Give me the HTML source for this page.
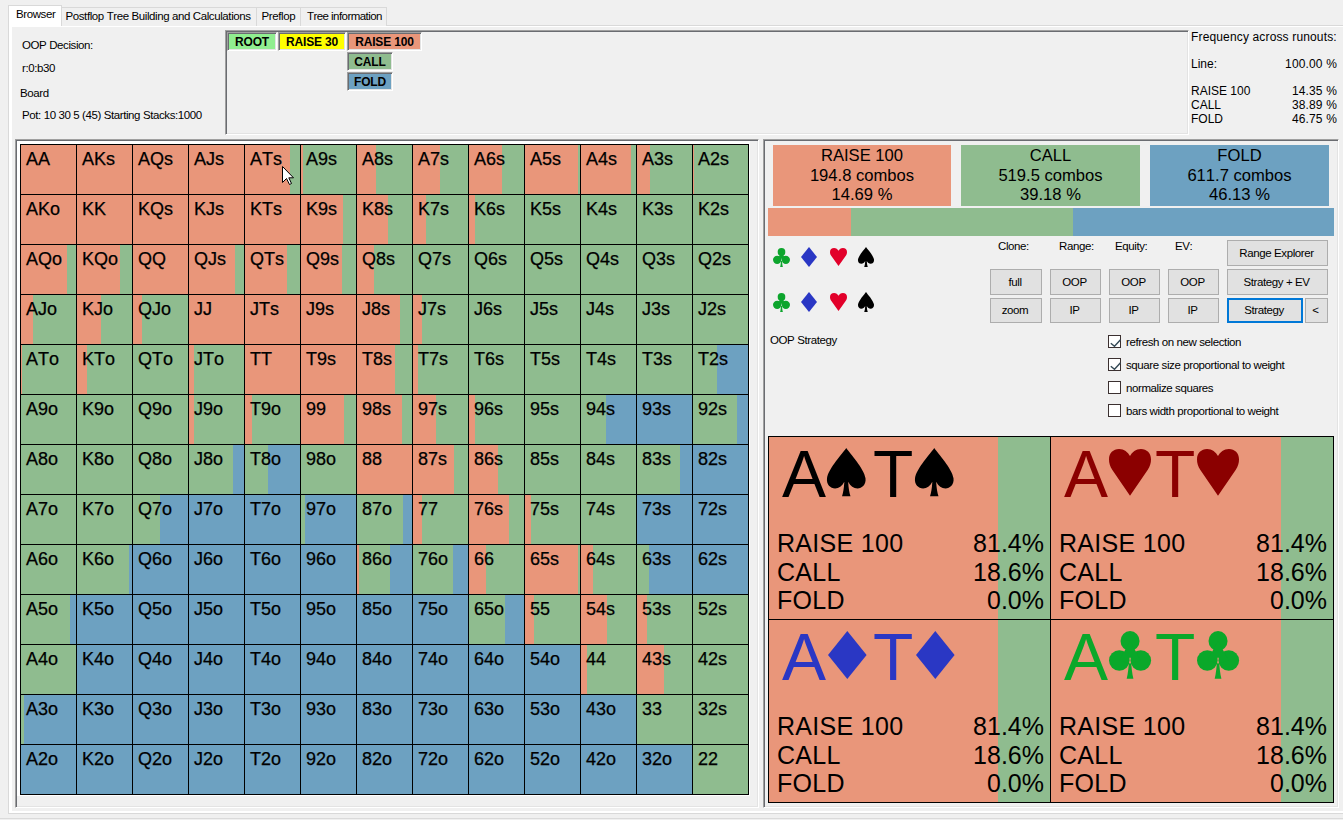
<!DOCTYPE html>
<html><head><meta charset="utf-8">
<style>
*{margin:0;padding:0;box-sizing:border-box}
html,body{width:1343px;height:820px;overflow:hidden;background:#F0F0F0;font-family:"Liberation Sans",sans-serif;color:#000;font-kerning:none}
.a{position:absolute}
.ui{font-size:11.5px;letter-spacing:-0.4px;white-space:pre;line-height:13px}
.tab{position:absolute;top:7px;height:19px;border:1px solid #D9D9D9;border-bottom:none;background:#F0F0F0;font-size:11.5px;letter-spacing:-0.4px;padding-top:2px;white-space:pre}
.f3d{position:absolute;border-style:solid;border-width:1px;border-color:#A0A0A0 #FFFFFF #FFFFFF #A0A0A0;box-shadow:inset 1px 1px 0 #6A6C71,inset -1px -1px 0 #E3E3E3}
.lbl{position:absolute;height:19px;font-weight:bold;font-size:12px;letter-spacing:-0.15px;text-align:center;line-height:14px;border-style:solid;border-width:1px;border-color:#A0A0A0 #fff #fff #A0A0A0;box-shadow:inset 1px 1px 0 #6A6C71,inset -1px -1px 0 #E3E3E3;padding-top:2px}
#grid{position:absolute;left:20px;top:144px;width:729px;height:651px;background:#000}
.c{position:absolute;width:55px;height:49px}
.c span{position:absolute;left:5px;top:4px;font-size:18px;line-height:21px;white-space:pre;-webkit-text-stroke:0.25px #000}
.btn{position:absolute;background:#E1E1E1;border:1px solid #ADADAD;font-size:11.5px;letter-spacing:-0.4px;text-align:center;white-space:pre;padding-right:2px}
.chk{position:absolute;width:13px;height:13px;border:1px solid #3B3030;background:#fff}
.card{position:absolute;width:282px;height:183px;background:linear-gradient(90deg,#E9967A 0 229px,#8FBC8F 229px)}
.big{position:absolute;left:13px;top:1px;font-size:66px;line-height:73px;white-space:pre}
.pl{position:absolute;left:8px;font-size:25px;letter-spacing:0.3px;line-height:28.5px;white-space:pre}
.pr{position:absolute;right:6px;font-size:25px;line-height:28.5px;white-space:pre;text-align:right}
</style></head><body>
<!-- tab strip -->
<div class="a" style="left:8px;top:25px;width:1335px;height:1px;background:#D9D9D9"></div>
<div class="tab" style="left:61px;width:196px;padding-left:3.5px">Postflop Tree Building and Calculations</div>
<div class="tab" style="left:256px;width:45px;padding-left:4.5px">Preflop</div>
<div class="tab" style="left:300px;width:87px;padding-left:6px;letter-spacing:-0.55px">Tree information</div>
<div class="a" style="left:8px;top:5px;width:54px;height:22px;border:1px solid #D9D9D9;border-bottom:none;background:#fff;font-size:11.5px;letter-spacing:-0.4px;padding:2px 0 0 7px;white-space:pre">Browser</div>
<!-- tab page -->
<div class="a" style="left:8px;top:26px;width:1335px;height:788px;border:1px solid #D9D9D9;border-top:none;border-right:none"></div>
<div class="a" style="left:9px;top:26px;width:1334px;height:787px;border:3px solid #fff;border-top:1px solid #fff;border-bottom-width:2px;border-right:none"></div>
<div class="a" style="left:0;top:818px;width:1343px;height:1px;background:#DADADA"></div>

<!-- info -->
<div class="a ui" style="left:22px;top:39px">OOP Decision:</div>
<div class="a ui" style="left:22px;top:62px">r:0:b30</div>
<div class="a ui" style="left:20px;top:87px">Board</div>
<div class="a ui" style="left:22px;top:109px">Pot: 10 30 5 (45) Starting Stacks:1000</div>

<!-- tree box -->
<div class="f3d" style="left:225px;top:30px;width:964px;height:105px"></div>
<div class="lbl" style="left:227px;top:32px;width:50px;background:#90EE90">ROOT</div>
<div class="lbl" style="left:278px;top:32px;width:68px;background:#FFFF00">RAISE 30</div>
<div class="lbl" style="left:347px;top:32px;width:75px;background:#E9967A">RAISE 100</div>
<div class="lbl" style="left:347px;top:52px;width:46px;background:#8FBC8F">CALL</div>
<div class="lbl" style="left:347px;top:72px;width:46px;background:#6DA1C1">FOLD</div>

<!-- frequency -->
<div class="a" style="left:1191px;top:30px;width:150px;font-size:12px;letter-spacing:0.15px;line-height:14px;white-space:pre">Frequency across runouts:</div>
<div class="a" style="left:1191px;top:57px;font-size:12px;line-height:14px">Line:</div>
<div class="a" style="left:1237px;top:57px;width:100px;text-align:right;font-size:12px;letter-spacing:0.15px;line-height:14px">100.00 %</div>
<div class="a" style="left:1191px;top:84px;font-size:12px;line-height:14px;white-space:pre">RAISE 100<br>CALL<br>FOLD</div>
<div class="a" style="left:1237px;top:84px;width:100px;text-align:right;font-size:12px;letter-spacing:0.15px;line-height:14px">14.35 %<br>38.89 %<br>46.75 %</div>

<!-- grid panel -->
<div class="f3d" style="left:15px;top:139px;width:744px;height:669px;background:#F0F0F0"></div>
<div class="a" style="left:17px;top:141px;width:733px;height:655px;background:#fff"></div>
<div id="grid">
<div class="c" style="left:1px;top:1px;background:#E9967A"><span>AA</span></div>
<div class="c" style="left:57px;top:1px;background:#E9967A"><span>AKs</span></div>
<div class="c" style="left:113px;top:1px;background:#E9967A"><span>AQs</span></div>
<div class="c" style="left:169px;top:1px;background:#E9967A"><span>AJs</span></div>
<div class="c" style="left:225px;top:1px;background:linear-gradient(90deg,#E9967A 0 45px,#8FBC8F 45px 55px)"><span>ATs</span></div>
<div class="c" style="left:281px;top:1px;background:linear-gradient(90deg,#E9967A 0 2px,#8FBC8F 2px 55px)"><span>A9s</span></div>
<div class="c" style="left:337px;top:1px;background:linear-gradient(90deg,#E9967A 0 19px,#8FBC8F 19px 55px)"><span>A8s</span></div>
<div class="c" style="left:393px;top:1px;background:linear-gradient(90deg,#E9967A 0 27px,#8FBC8F 27px 55px)"><span>A7s</span></div>
<div class="c" style="left:449px;top:1px;background:linear-gradient(90deg,#E9967A 0 33px,#8FBC8F 33px 55px)"><span>A6s</span></div>
<div class="c" style="left:505px;top:1px;background:linear-gradient(90deg,#E9967A 0 53px,#8FBC8F 53px 55px)"><span>A5s</span></div>
<div class="c" style="left:561px;top:1px;background:linear-gradient(90deg,#E9967A 0 50px,#8FBC8F 50px 55px)"><span>A4s</span></div>
<div class="c" style="left:617px;top:1px;background:linear-gradient(90deg,#E9967A 0 13px,#8FBC8F 13px 55px)"><span>A3s</span></div>
<div class="c" style="left:673px;top:1px;background:linear-gradient(90deg,#E9967A 0 0.5px,#8FBC8F 0.5px 55px)"><span>A2s</span></div>
<div class="c" style="left:1px;top:51px;background:#E9967A"><span>AKo</span></div>
<div class="c" style="left:57px;top:51px;background:#E9967A"><span>KK</span></div>
<div class="c" style="left:113px;top:51px;background:#E9967A"><span>KQs</span></div>
<div class="c" style="left:169px;top:51px;background:#E9967A"><span>KJs</span></div>
<div class="c" style="left:225px;top:51px;background:#E9967A"><span>KTs</span></div>
<div class="c" style="left:281px;top:51px;background:linear-gradient(90deg,#E9967A 0 42px,#8FBC8F 42px 55px)"><span>K9s</span></div>
<div class="c" style="left:337px;top:51px;background:linear-gradient(90deg,#E9967A 0 31px,#8FBC8F 31px 55px)"><span>K8s</span></div>
<div class="c" style="left:393px;top:51px;background:linear-gradient(90deg,#E9967A 0 13px,#8FBC8F 13px 55px)"><span>K7s</span></div>
<div class="c" style="left:449px;top:51px;background:linear-gradient(90deg,#E9967A 0 6px,#8FBC8F 6px 55px)"><span>K6s</span></div>
<div class="c" style="left:505px;top:51px;background:#8FBC8F"><span>K5s</span></div>
<div class="c" style="left:561px;top:51px;background:#8FBC8F"><span>K4s</span></div>
<div class="c" style="left:617px;top:51px;background:#8FBC8F"><span>K3s</span></div>
<div class="c" style="left:673px;top:51px;background:#8FBC8F"><span>K2s</span></div>
<div class="c" style="left:1px;top:101px;background:linear-gradient(90deg,#E9967A 0 46px,#8FBC8F 46px 55px)"><span>AQo</span></div>
<div class="c" style="left:57px;top:101px;background:linear-gradient(90deg,#E9967A 0 43px,#8FBC8F 43px 55px)"><span>KQo</span></div>
<div class="c" style="left:113px;top:101px;background:#E9967A"><span>QQ</span></div>
<div class="c" style="left:169px;top:101px;background:linear-gradient(90deg,#E9967A 0 46px,#8FBC8F 46px 55px)"><span>QJs</span></div>
<div class="c" style="left:225px;top:101px;background:linear-gradient(90deg,#E9967A 0 42px,#8FBC8F 42px 55px)"><span>QTs</span></div>
<div class="c" style="left:281px;top:101px;background:linear-gradient(90deg,#E9967A 0 41px,#8FBC8F 41px 55px)"><span>Q9s</span></div>
<div class="c" style="left:337px;top:101px;background:linear-gradient(90deg,#E9967A 0 17px,#8FBC8F 17px 55px)"><span>Q8s</span></div>
<div class="c" style="left:393px;top:101px;background:#8FBC8F"><span>Q7s</span></div>
<div class="c" style="left:449px;top:101px;background:#8FBC8F"><span>Q6s</span></div>
<div class="c" style="left:505px;top:101px;background:#8FBC8F"><span>Q5s</span></div>
<div class="c" style="left:561px;top:101px;background:#8FBC8F"><span>Q4s</span></div>
<div class="c" style="left:617px;top:101px;background:#8FBC8F"><span>Q3s</span></div>
<div class="c" style="left:673px;top:101px;background:#8FBC8F"><span>Q2s</span></div>
<div class="c" style="left:1px;top:151px;background:linear-gradient(90deg,#E9967A 0 12px,#8FBC8F 12px 55px)"><span>AJo</span></div>
<div class="c" style="left:57px;top:151px;background:linear-gradient(90deg,#E9967A 0 24px,#8FBC8F 24px 55px)"><span>KJo</span></div>
<div class="c" style="left:113px;top:151px;background:linear-gradient(90deg,#E9967A 0 9px,#8FBC8F 9px 55px)"><span>QJo</span></div>
<div class="c" style="left:169px;top:151px;background:#E9967A"><span>JJ</span></div>
<div class="c" style="left:225px;top:151px;background:#E9967A"><span>JTs</span></div>
<div class="c" style="left:281px;top:151px;background:#E9967A"><span>J9s</span></div>
<div class="c" style="left:337px;top:151px;background:linear-gradient(90deg,#E9967A 0 43px,#8FBC8F 43px 55px)"><span>J8s</span></div>
<div class="c" style="left:393px;top:151px;background:linear-gradient(90deg,#E9967A 0 9px,#8FBC8F 9px 55px)"><span>J7s</span></div>
<div class="c" style="left:449px;top:151px;background:#8FBC8F"><span>J6s</span></div>
<div class="c" style="left:505px;top:151px;background:#8FBC8F"><span>J5s</span></div>
<div class="c" style="left:561px;top:151px;background:#8FBC8F"><span>J4s</span></div>
<div class="c" style="left:617px;top:151px;background:#8FBC8F"><span>J3s</span></div>
<div class="c" style="left:673px;top:151px;background:#8FBC8F"><span>J2s</span></div>
<div class="c" style="left:1px;top:201px;background:linear-gradient(90deg,#E9967A 0 1px,#8FBC8F 1px 55px)"><span>ATo</span></div>
<div class="c" style="left:57px;top:201px;background:linear-gradient(90deg,#E9967A 0 10px,#8FBC8F 10px 55px)"><span>KTo</span></div>
<div class="c" style="left:113px;top:201px;background:linear-gradient(90deg,#E9967A 0 0.5px,#8FBC8F 0.5px 55px)"><span>QTo</span></div>
<div class="c" style="left:169px;top:201px;background:linear-gradient(90deg,#E9967A 0 5px,#8FBC8F 5px 55px)"><span>JTo</span></div>
<div class="c" style="left:225px;top:201px;background:#E9967A"><span>TT</span></div>
<div class="c" style="left:281px;top:201px;background:#E9967A"><span>T9s</span></div>
<div class="c" style="left:337px;top:201px;background:linear-gradient(90deg,#E9967A 0 38px,#8FBC8F 38px 55px)"><span>T8s</span></div>
<div class="c" style="left:393px;top:201px;background:linear-gradient(90deg,#E9967A 0 5px,#8FBC8F 5px 55px)"><span>T7s</span></div>
<div class="c" style="left:449px;top:201px;background:#8FBC8F"><span>T6s</span></div>
<div class="c" style="left:505px;top:201px;background:#8FBC8F"><span>T5s</span></div>
<div class="c" style="left:561px;top:201px;background:linear-gradient(90deg,#E9967A 0 0.5px,#8FBC8F 0.5px 55px)"><span>T4s</span></div>
<div class="c" style="left:617px;top:201px;background:#8FBC8F"><span>T3s</span></div>
<div class="c" style="left:673px;top:201px;background:linear-gradient(90deg,#8FBC8F 0px 24px,#6DA1C1 24px)"><span>T2s</span></div>
<div class="c" style="left:1px;top:251px;background:#8FBC8F"><span>A9o</span></div>
<div class="c" style="left:57px;top:251px;background:#8FBC8F"><span>K9o</span></div>
<div class="c" style="left:113px;top:251px;background:#8FBC8F"><span>Q9o</span></div>
<div class="c" style="left:169px;top:251px;background:linear-gradient(90deg,#E9967A 0 5px,#8FBC8F 5px 55px)"><span>J9o</span></div>
<div class="c" style="left:225px;top:251px;background:linear-gradient(90deg,#E9967A 0 7px,#8FBC8F 7px 55px)"><span>T9o</span></div>
<div class="c" style="left:281px;top:251px;background:linear-gradient(90deg,#E9967A 0 43px,#8FBC8F 43px 55px)"><span>99</span></div>
<div class="c" style="left:337px;top:251px;background:linear-gradient(90deg,#E9967A 0 45px,#8FBC8F 45px 55px)"><span>98s</span></div>
<div class="c" style="left:393px;top:251px;background:linear-gradient(90deg,#E9967A 0 23px,#8FBC8F 23px 55px)"><span>97s</span></div>
<div class="c" style="left:449px;top:251px;background:linear-gradient(90deg,#E9967A 0 6px,#8FBC8F 6px 55px)"><span>96s</span></div>
<div class="c" style="left:505px;top:251px;background:#8FBC8F"><span>95s</span></div>
<div class="c" style="left:561px;top:251px;background:linear-gradient(90deg,#8FBC8F 0px 25px,#6DA1C1 25px)"><span>94s</span></div>
<div class="c" style="left:617px;top:251px;background:#6DA1C1"><span>93s</span></div>
<div class="c" style="left:673px;top:251px;background:linear-gradient(90deg,#8FBC8F 0px 44px,#6DA1C1 44px)"><span>92s</span></div>
<div class="c" style="left:1px;top:301px;background:#8FBC8F"><span>A8o</span></div>
<div class="c" style="left:57px;top:301px;background:#8FBC8F"><span>K8o</span></div>
<div class="c" style="left:113px;top:301px;background:#8FBC8F"><span>Q8o</span></div>
<div class="c" style="left:169px;top:301px;background:linear-gradient(90deg,#8FBC8F 0px 44px,#6DA1C1 44px)"><span>J8o</span></div>
<div class="c" style="left:225px;top:301px;background:linear-gradient(90deg,#8FBC8F 0px 23px,#6DA1C1 23px)"><span>T8o</span></div>
<div class="c" style="left:281px;top:301px;background:#8FBC8F"><span>98o</span></div>
<div class="c" style="left:337px;top:301px;background:#E9967A"><span>88</span></div>
<div class="c" style="left:393px;top:301px;background:linear-gradient(90deg,#E9967A 0 41px,#8FBC8F 41px 55px)"><span>87s</span></div>
<div class="c" style="left:449px;top:301px;background:linear-gradient(90deg,#E9967A 0 29px,#8FBC8F 29px 55px)"><span>86s</span></div>
<div class="c" style="left:505px;top:301px;background:#8FBC8F"><span>85s</span></div>
<div class="c" style="left:561px;top:301px;background:#8FBC8F"><span>84s</span></div>
<div class="c" style="left:617px;top:301px;background:linear-gradient(90deg,#8FBC8F 0px 43px,#6DA1C1 43px)"><span>83s</span></div>
<div class="c" style="left:673px;top:301px;background:#6DA1C1"><span>82s</span></div>
<div class="c" style="left:1px;top:351px;background:#8FBC8F"><span>A7o</span></div>
<div class="c" style="left:57px;top:351px;background:#8FBC8F"><span>K7o</span></div>
<div class="c" style="left:113px;top:351px;background:linear-gradient(90deg,#8FBC8F 0px 27px,#6DA1C1 27px)"><span>Q7o</span></div>
<div class="c" style="left:169px;top:351px;background:#6DA1C1"><span>J7o</span></div>
<div class="c" style="left:225px;top:351px;background:#6DA1C1"><span>T7o</span></div>
<div class="c" style="left:281px;top:351px;background:linear-gradient(90deg,#8FBC8F 0px 4px,#6DA1C1 4px)"><span>97o</span></div>
<div class="c" style="left:337px;top:351px;background:linear-gradient(90deg,#8FBC8F 0px 46px,#6DA1C1 46px)"><span>87o</span></div>
<div class="c" style="left:393px;top:351px;background:linear-gradient(90deg,#E9967A 0 9px,#8FBC8F 9px 55px)"><span>77</span></div>
<div class="c" style="left:449px;top:351px;background:linear-gradient(90deg,#E9967A 0 40px,#8FBC8F 40px 55px)"><span>76s</span></div>
<div class="c" style="left:505px;top:351px;background:linear-gradient(90deg,#E9967A 0 6px,#8FBC8F 6px 55px)"><span>75s</span></div>
<div class="c" style="left:561px;top:351px;background:#8FBC8F"><span>74s</span></div>
<div class="c" style="left:617px;top:351px;background:#6DA1C1"><span>73s</span></div>
<div class="c" style="left:673px;top:351px;background:#6DA1C1"><span>72s</span></div>
<div class="c" style="left:1px;top:401px;background:#8FBC8F"><span>A6o</span></div>
<div class="c" style="left:57px;top:401px;background:linear-gradient(90deg,#8FBC8F 0px 52px,#6DA1C1 52px)"><span>K6o</span></div>
<div class="c" style="left:113px;top:401px;background:#6DA1C1"><span>Q6o</span></div>
<div class="c" style="left:169px;top:401px;background:#6DA1C1"><span>J6o</span></div>
<div class="c" style="left:225px;top:401px;background:#6DA1C1"><span>T6o</span></div>
<div class="c" style="left:281px;top:401px;background:#6DA1C1"><span>96o</span></div>
<div class="c" style="left:337px;top:401px;background:linear-gradient(90deg,#E9967A 0 2px,#8FBC8F 2px 33px,#6DA1C1 33px)"><span>86o</span></div>
<div class="c" style="left:393px;top:401px;background:linear-gradient(90deg,#8FBC8F 0px 40px,#6DA1C1 40px)"><span>76o</span></div>
<div class="c" style="left:449px;top:401px;background:linear-gradient(90deg,#E9967A 0 17px,#8FBC8F 17px 55px)"><span>66</span></div>
<div class="c" style="left:505px;top:401px;background:linear-gradient(90deg,#E9967A 0 53px,#8FBC8F 53px 55px)"><span>65s</span></div>
<div class="c" style="left:561px;top:401px;background:linear-gradient(90deg,#E9967A 0 12px,#8FBC8F 12px 55px)"><span>64s</span></div>
<div class="c" style="left:617px;top:401px;background:linear-gradient(90deg,#8FBC8F 0px 12px,#6DA1C1 12px)"><span>63s</span></div>
<div class="c" style="left:673px;top:401px;background:#6DA1C1"><span>62s</span></div>
<div class="c" style="left:1px;top:451px;background:linear-gradient(90deg,#8FBC8F 0px 49px,#6DA1C1 49px)"><span>A5o</span></div>
<div class="c" style="left:57px;top:451px;background:#6DA1C1"><span>K5o</span></div>
<div class="c" style="left:113px;top:451px;background:#6DA1C1"><span>Q5o</span></div>
<div class="c" style="left:169px;top:451px;background:#6DA1C1"><span>J5o</span></div>
<div class="c" style="left:225px;top:451px;background:#6DA1C1"><span>T5o</span></div>
<div class="c" style="left:281px;top:451px;background:#6DA1C1"><span>95o</span></div>
<div class="c" style="left:337px;top:451px;background:#6DA1C1"><span>85o</span></div>
<div class="c" style="left:393px;top:451px;background:#6DA1C1"><span>75o</span></div>
<div class="c" style="left:449px;top:451px;background:linear-gradient(90deg,#8FBC8F 0px 36px,#6DA1C1 36px)"><span>65o</span></div>
<div class="c" style="left:505px;top:451px;background:linear-gradient(90deg,#E9967A 0 9px,#8FBC8F 9px 55px)"><span>55</span></div>
<div class="c" style="left:561px;top:451px;background:linear-gradient(90deg,#E9967A 0 26px,#8FBC8F 26px 55px)"><span>54s</span></div>
<div class="c" style="left:617px;top:451px;background:linear-gradient(90deg,#E9967A 0 10px,#8FBC8F 10px 55px)"><span>53s</span></div>
<div class="c" style="left:673px;top:451px;background:#8FBC8F"><span>52s</span></div>
<div class="c" style="left:1px;top:501px;background:#8FBC8F"><span>A4o</span></div>
<div class="c" style="left:57px;top:501px;background:#6DA1C1"><span>K4o</span></div>
<div class="c" style="left:113px;top:501px;background:#6DA1C1"><span>Q4o</span></div>
<div class="c" style="left:169px;top:501px;background:#6DA1C1"><span>J4o</span></div>
<div class="c" style="left:225px;top:501px;background:#6DA1C1"><span>T4o</span></div>
<div class="c" style="left:281px;top:501px;background:#6DA1C1"><span>94o</span></div>
<div class="c" style="left:337px;top:501px;background:#6DA1C1"><span>84o</span></div>
<div class="c" style="left:393px;top:501px;background:#6DA1C1"><span>74o</span></div>
<div class="c" style="left:449px;top:501px;background:#6DA1C1"><span>64o</span></div>
<div class="c" style="left:505px;top:501px;background:#6DA1C1"><span>54o</span></div>
<div class="c" style="left:561px;top:501px;background:linear-gradient(90deg,#E9967A 0 6px,#8FBC8F 6px 55px)"><span>44</span></div>
<div class="c" style="left:617px;top:501px;background:linear-gradient(90deg,#E9967A 0 27px,#8FBC8F 27px 55px)"><span>43s</span></div>
<div class="c" style="left:673px;top:501px;background:#8FBC8F"><span>42s</span></div>
<div class="c" style="left:1px;top:551px;background:linear-gradient(90deg,#8FBC8F 0px 3px,#6DA1C1 3px)"><span>A3o</span></div>
<div class="c" style="left:57px;top:551px;background:#6DA1C1"><span>K3o</span></div>
<div class="c" style="left:113px;top:551px;background:#6DA1C1"><span>Q3o</span></div>
<div class="c" style="left:169px;top:551px;background:#6DA1C1"><span>J3o</span></div>
<div class="c" style="left:225px;top:551px;background:#6DA1C1"><span>T3o</span></div>
<div class="c" style="left:281px;top:551px;background:#6DA1C1"><span>93o</span></div>
<div class="c" style="left:337px;top:551px;background:#6DA1C1"><span>83o</span></div>
<div class="c" style="left:393px;top:551px;background:#6DA1C1"><span>73o</span></div>
<div class="c" style="left:449px;top:551px;background:#6DA1C1"><span>63o</span></div>
<div class="c" style="left:505px;top:551px;background:#6DA1C1"><span>53o</span></div>
<div class="c" style="left:561px;top:551px;background:#6DA1C1"><span>43o</span></div>
<div class="c" style="left:617px;top:551px;background:#8FBC8F"><span>33</span></div>
<div class="c" style="left:673px;top:551px;background:#8FBC8F"><span>32s</span></div>
<div class="c" style="left:1px;top:601px;background:#6DA1C1"><span>A2o</span></div>
<div class="c" style="left:57px;top:601px;background:#6DA1C1"><span>K2o</span></div>
<div class="c" style="left:113px;top:601px;background:#6DA1C1"><span>Q2o</span></div>
<div class="c" style="left:169px;top:601px;background:#6DA1C1"><span>J2o</span></div>
<div class="c" style="left:225px;top:601px;background:#6DA1C1"><span>T2o</span></div>
<div class="c" style="left:281px;top:601px;background:#6DA1C1"><span>92o</span></div>
<div class="c" style="left:337px;top:601px;background:#6DA1C1"><span>82o</span></div>
<div class="c" style="left:393px;top:601px;background:#6DA1C1"><span>72o</span></div>
<div class="c" style="left:449px;top:601px;background:#6DA1C1"><span>62o</span></div>
<div class="c" style="left:505px;top:601px;background:#6DA1C1"><span>52o</span></div>
<div class="c" style="left:561px;top:601px;background:#6DA1C1"><span>42o</span></div>
<div class="c" style="left:617px;top:601px;background:#6DA1C1"><span>32o</span></div>
<div class="c" style="left:673px;top:601px;background:#8FBC8F"><span>22</span></div>
</div>

<svg class="a" style="left:282px;top:166px" width="13" height="20" viewBox="0 0 13 20"><path d="M0.5 0.5 L0.5 16.5 L4.5 12.5 L7.5 18.5 L9.5 17.5 L6.8 11.8 L11.5 11.8 Z" fill="#fff" stroke="#000" stroke-width="1" stroke-linejoin="miter"/></svg>
<!-- right panel -->
<div class="f3d" style="left:763px;top:139px;width:576px;height:669px"></div>
<div class="a" style="left:773px;top:145px;width:178px;height:61px;background:#E9967A;text-align:center;font-size:16.6px;line-height:19.5px;padding-top:1px">RAISE 100<br>194.8 combos<br>14.69 %</div>
<div class="a" style="left:961px;top:145px;width:179px;height:61px;background:#8FBC8F;text-align:center;font-size:16.6px;line-height:19.5px;padding-top:1px">CALL<br>519.5 combos<br>39.18 %</div>
<div class="a" style="left:1150px;top:145px;width:179px;height:61px;background:#6DA1C1;text-align:center;font-size:16.6px;line-height:19.5px;padding-top:1px">FOLD<br>611.7 combos<br>46.13 %</div>
<div class="a" style="left:768px;top:208px;width:566px;height:28px;background:linear-gradient(90deg,#E9967A 0 83px,#8FBC8F 83px 305px,#6DA1C1 305px)"></div>

<!-- suits -->
<svg class="a" style="left:773px;top:248px;overflow:visible" width="17" height="19" viewBox="0 0 100 100" preserveAspectRatio="none"><g fill="#0DA52D"><ellipse cx="50" cy="21" rx="22.6" ry="21"/><ellipse cx="24.5" cy="62" rx="24.5" ry="21.6"/><ellipse cx="75.5" cy="62" rx="24.5" ry="21.6"/><path d="M50 21 L24.5 62 L50 68 L75.5 62Z M48 56 L52 56 C53 75 55 90 58 100 L42 100 C45 90 47 75 48 56Z"/></g></svg>
<svg class="a" style="left:801px;top:247px;overflow:visible" width="16" height="20" viewBox="0 0 100 100" preserveAspectRatio="none"><path d="M50 0 L100 50 L50 100 L0 50Z" fill="#2A37C4"/></svg>
<svg class="a" style="left:830px;top:248px;overflow:visible" width="17" height="18" viewBox="0 0 100 100" preserveAspectRatio="none"><path d="M50 100 L8 45 C2 37 0 30 0 22 C0 9 10 0 24 0 C36 0 45 7 50 15 C55 7 64 0 76 0 C90 0 100 9 100 22 C100 30 98 37 92 45 Z" fill="#E2002A"/></svg>
<svg class="a" style="left:858px;top:247px;overflow:visible" width="16" height="20" viewBox="0 0 100 100" preserveAspectRatio="none"><path d="M50 0 C40 12 4 42 0 63 C-2 76 9 84 21 84 C31 84 39 79 45 70 C44 84 42 93 39 100 L61 100 C58 93 56 84 55 70 C61 79 69 84 79 84 C91 84 102 76 100 63 C96 42 60 12 50 0Z" fill="#000"/></svg>
<svg class="a" style="left:773px;top:293px;overflow:visible" width="17" height="19" viewBox="0 0 100 100" preserveAspectRatio="none"><g fill="#0DA52D"><ellipse cx="50" cy="21" rx="22.6" ry="21"/><ellipse cx="24.5" cy="62" rx="24.5" ry="21.6"/><ellipse cx="75.5" cy="62" rx="24.5" ry="21.6"/><path d="M50 21 L24.5 62 L50 68 L75.5 62Z M48 56 L52 56 C53 75 55 90 58 100 L42 100 C45 90 47 75 48 56Z"/></g></svg>
<svg class="a" style="left:801px;top:292px;overflow:visible" width="16" height="20" viewBox="0 0 100 100" preserveAspectRatio="none"><path d="M50 0 L100 50 L50 100 L0 50Z" fill="#2A37C4"/></svg>
<svg class="a" style="left:830px;top:293px;overflow:visible" width="17" height="18" viewBox="0 0 100 100" preserveAspectRatio="none"><path d="M50 100 L8 45 C2 37 0 30 0 22 C0 9 10 0 24 0 C36 0 45 7 50 15 C55 7 64 0 76 0 C90 0 100 9 100 22 C100 30 98 37 92 45 Z" fill="#E2002A"/></svg>
<svg class="a" style="left:858px;top:292px;overflow:visible" width="16" height="20" viewBox="0 0 100 100" preserveAspectRatio="none"><path d="M50 0 C40 12 4 42 0 63 C-2 76 9 84 21 84 C31 84 39 79 45 70 C44 84 42 93 39 100 L61 100 C58 93 56 84 55 70 C61 79 69 84 79 84 C91 84 102 76 100 63 C96 42 60 12 50 0Z" fill="#000"/></svg>

<div class="a ui" style="left:998px;top:240px">Clone:</div>
<div class="a ui" style="left:1059px;top:240px">Range:</div>
<div class="a ui" style="left:1115px;top:240px">Equity:</div>
<div class="a ui" style="left:1175px;top:240px">EV:</div>
<div class="btn" style="left:1227px;top:240px;width:101px;height:26px;line-height:24px">Range Explorer</div>
<div class="btn" style="left:990px;top:269px;width:52px;height:26px;line-height:24px">full</div>
<div class="btn" style="left:990px;top:298px;width:52px;height:25px;line-height:23px">zoom</div>
<div class="btn" style="left:1050px;top:269px;width:51px;height:26px;line-height:24px">OOP</div>
<div class="btn" style="left:1050px;top:298px;width:51px;height:25px;line-height:23px">IP</div>
<div class="btn" style="left:1109px;top:269px;width:51px;height:26px;line-height:24px">OOP</div>
<div class="btn" style="left:1109px;top:298px;width:51px;height:25px;line-height:23px">IP</div>
<div class="btn" style="left:1168px;top:269px;width:51px;height:26px;line-height:24px">OOP</div>
<div class="btn" style="left:1168px;top:298px;width:51px;height:25px;line-height:23px">IP</div>
<div class="btn" style="left:1227px;top:269px;width:101px;height:26px;line-height:24px">Strategy + EV</div>
<div class="btn" style="left:1227px;top:298px;width:76px;height:25px;line-height:21px;border:2px solid #0078D7">Strategy</div>
<div class="btn" style="left:1305px;top:298px;width:23px;height:25px;line-height:23px">&lt;</div>

<div class="a ui" style="left:770px;top:334px">OOP Strategy</div>

<div class="chk" style="left:1108px;top:335px"><svg class="a" style="left:1px;top:1px" width="11" height="11" viewBox="0 0 11 11"><path d="M0.8 6.2 L4.5 9.3 L10.5 2.8" stroke="#344955" stroke-width="1.4" fill="none"/></svg></div><div class="a ui" style="left:1126px;top:336px">refresh on new selection</div>
<div class="chk" style="left:1108px;top:358px"><svg class="a" style="left:1px;top:1px" width="11" height="11" viewBox="0 0 11 11"><path d="M0.8 6.2 L4.5 9.3 L10.5 2.8" stroke="#344955" stroke-width="1.4" fill="none"/></svg></div><div class="a ui" style="left:1126px;top:359px">square size proportional to weight</div>
<div class="chk" style="left:1108px;top:381px"></div><div class="a ui" style="left:1126px;top:382px">normalize squares</div>
<div class="chk" style="left:1108px;top:404px"></div><div class="a ui" style="left:1126px;top:405px">bars width proportional to weight</div>

<!-- cards -->
<div class="a" style="left:768px;top:436px;width:566px;height:367px;background:#000"></div>
<div class="card" style="left:769px;top:437px;width:281px;height:182px;background:linear-gradient(90deg,#E9967A 0 229px,#8FBC8F 229px)"><div class="big" style="color:#000">A</div><div class="big" style="left:104px;color:#000">T</div><svg class="a" style="left:58px;top:10.75px;overflow:visible" width="38.5" height="48.15" viewBox="0 0 100 100" preserveAspectRatio="none"><path d="M50 0 C40 12 4 42 0 63 C-2 76 9 84 21 84 C31 84 39 79 45 70 C44 84 42 93 39 100 L61 100 C58 93 56 84 55 70 C61 79 69 84 79 84 C91 84 102 76 100 63 C96 42 60 12 50 0Z" fill="#000"/></svg><svg class="a" style="left:146px;top:10.75px;overflow:visible" width="38.5" height="48.15" viewBox="0 0 100 100" preserveAspectRatio="none"><path d="M50 0 C40 12 4 42 0 63 C-2 76 9 84 21 84 C31 84 39 79 45 70 C44 84 42 93 39 100 L61 100 C58 93 56 84 55 70 C61 79 69 84 79 84 C91 84 102 76 100 63 C96 42 60 12 50 0Z" fill="#000"/></svg><div class="pl" style="top:92px">RAISE 100<br>CALL<br>FOLD</div><div class="pr" style="top:92px">81.4%<br>18.6%<br>0.0%</div></div>
<div class="card" style="left:1051px;top:437px;width:282px;height:182px;background:linear-gradient(90deg,#E9967A 0 230px,#8FBC8F 230px)"><div class="big" style="color:#8B0000">A</div><div class="big" style="left:104px;color:#8B0000">T</div><svg class="a" style="left:58.1px;top:11.9px;overflow:visible" width="42" height="46.7" viewBox="0 0 100 100" preserveAspectRatio="none"><path d="M50 100 L8 45 C2 37 0 30 0 22 C0 9 10 0 24 0 C36 0 45 7 50 15 C55 7 64 0 76 0 C90 0 100 9 100 22 C100 30 98 37 92 45 Z" fill="#8B0000"/></svg><svg class="a" style="left:146.1px;top:11.9px;overflow:visible" width="42" height="46.7" viewBox="0 0 100 100" preserveAspectRatio="none"><path d="M50 100 L8 45 C2 37 0 30 0 22 C0 9 10 0 24 0 C36 0 45 7 50 15 C55 7 64 0 76 0 C90 0 100 9 100 22 C100 30 98 37 92 45 Z" fill="#8B0000"/></svg><div class="pl" style="top:92px">RAISE 100<br>CALL<br>FOLD</div><div class="pr" style="top:92px">81.4%<br>18.6%<br>0.0%</div></div>
<div class="card" style="left:769px;top:620px;width:281px;height:182px;background:linear-gradient(90deg,#E9967A 0 229px,#8FBC8F 229px)"><div class="big" style="color:#2A37C4">A</div><div class="big" style="left:104px;color:#2A37C4">T</div><svg class="a" style="left:58.6px;top:11.2px;overflow:visible" width="38.6" height="47.9" viewBox="0 0 100 100" preserveAspectRatio="none"><path d="M50 0 L100 50 L50 100 L0 50Z" fill="#2A37C4"/></svg><svg class="a" style="left:146.6px;top:11.2px;overflow:visible" width="38.6" height="47.9" viewBox="0 0 100 100" preserveAspectRatio="none"><path d="M50 0 L100 50 L50 100 L0 50Z" fill="#2A37C4"/></svg><div class="pl" style="top:92px">RAISE 100<br>CALL<br>FOLD</div><div class="pr" style="top:92px">81.4%<br>18.6%<br>0.0%</div></div>
<div class="card" style="left:1051px;top:620px;width:282px;height:182px;background:linear-gradient(90deg,#E9967A 0 230px,#8FBC8F 230px)"><div class="big" style="color:#0AA82A">A</div><div class="big" style="left:104px;color:#0AA82A">T</div><svg class="a" style="left:58.3px;top:11px;overflow:visible" width="42.1" height="47.7" viewBox="0 0 100 100" preserveAspectRatio="none"><g fill="#0AA82A"><ellipse cx="50" cy="21" rx="22.6" ry="21"/><ellipse cx="24.5" cy="62" rx="24.5" ry="21.6"/><ellipse cx="75.5" cy="62" rx="24.5" ry="21.6"/><path d="M50 21 L24.5 62 L50 68 L75.5 62Z M48 56 L52 56 C53 75 55 90 58 100 L42 100 C45 90 47 75 48 56Z"/></g></svg><svg class="a" style="left:146.3px;top:11px;overflow:visible" width="42.1" height="47.7" viewBox="0 0 100 100" preserveAspectRatio="none"><g fill="#0AA82A"><ellipse cx="50" cy="21" rx="22.6" ry="21"/><ellipse cx="24.5" cy="62" rx="24.5" ry="21.6"/><ellipse cx="75.5" cy="62" rx="24.5" ry="21.6"/><path d="M50 21 L24.5 62 L50 68 L75.5 62Z M48 56 L52 56 C53 75 55 90 58 100 L42 100 C45 90 47 75 48 56Z"/></g></svg><div class="pl" style="top:92px">RAISE 100<br>CALL<br>FOLD</div><div class="pr" style="top:92px">81.4%<br>18.6%<br>0.0%</div></div>
</body></html>
